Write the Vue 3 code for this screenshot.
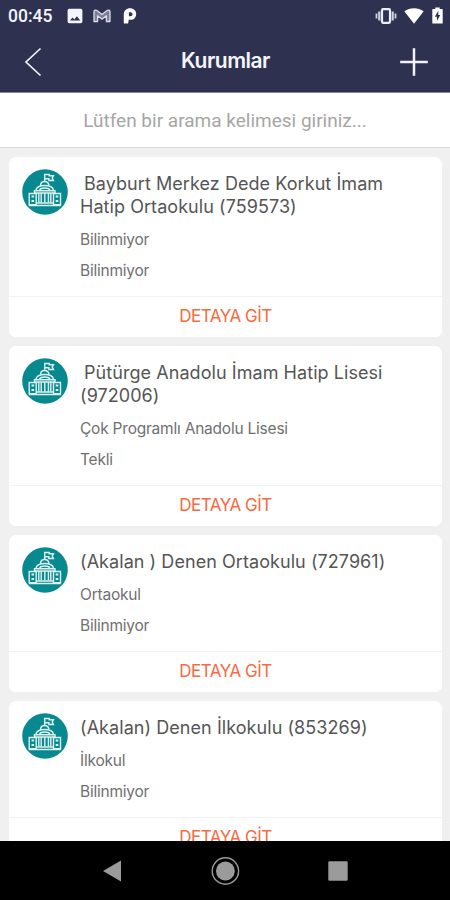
<template>
  <div class="screen">
    <header class="header">
      <div class="status-bar">
        <span class="clock">00:45</span>
        <svg class="status-image" width="16" height="16" viewBox="0 0 16 16">
          <path fill="#f4f4fb" fill-rule="evenodd" d="M2.3.7h11.4a1.7 1.7 0 0 1 1.7 1.7v11.2a1.7 1.7 0 0 1-1.7 1.7H2.3a1.7 1.7 0 0 1-1.7-1.7V2.4A1.7 1.7 0 0 1 2.3.7zM3 12.6h10.2L9.9 8.2l-2.6 3.3-1.8-2z" />
        </svg>
        <svg class="status-mail" width="18" height="14" viewBox="0 0 18 14">
          <path fill="#7d7f96" stroke="#dcdde8" stroke-width="1.3" stroke-linejoin="round" d="M1 12.500V2.800C1 1 2.800.6 4 1.600L9 5.500l5-3.900c1.200-1 3-.6 3 1.200v9.700h-3.600V6.800L9 10.200 4.600 6.800v5.700z" />
        </svg>
        <svg class="status-p" width="14" height="16" viewBox="0 0 14 16">
          <path fill="#fff" fill-rule="evenodd" d="M.8 15.500V6.200C.8 2.700 3.500.3 7 .3s6.200 2.300 6.200 5.600-2.400 5.900-5.500 5.900c-.8 0-1.400-.1-1.900-.3l-.7 4zM5.900 4.200v4h1.500c1.400 0 2.100-.8 2.100-2s-.8-2-2.100-2z" />
        </svg>
        <span class="spacer"></span>
        <svg class="status-vibrate" width="22" height="16" viewBox="0 0 22 16">
          <rect x="7" y="1.200" width="8" height="13.600" rx="1" fill="none" stroke="#eeeef6" stroke-width="2.200" />
          <path d="M4.300 3.500v9M17.700 3.500v9" stroke="#d0d1df" stroke-width="2.200" />
          <path d="M1.500 5.500v5M20.500 5.500v5" stroke="#d0d1df" stroke-width="1.800" />
        </svg>
        <svg class="status-wifi" width="20" height="16" viewBox="0 0 20 16">
          <path fill="#fff" d="M.3 3.300C6 -.8 14 -.8 19.700 3.300L10 15.700z" />
        </svg>
        <svg class="status-battery" width="11" height="17" viewBox="0 0 11 17">
          <path fill="#fff" d="M3.300.4h4.400v1.700H10a.7.7 0 0 1 .7.7v13.100a.7.7 0 0 1-.7.7H1a.7.7 0 0 1-.7-.7V2.800a.7.7 0 0 1 .7-.7h2.300z" />
          <path fill="#2e3150" d="M6.300 3.800 2.800 9.800h2.100v4.300l3.400-6H6.300z" />
        </svg>
      </div>
      <nav class="nav-bar">
        <svg width="20" height="30" viewBox="0 0 20 30">
          <path fill="none" stroke="#f3f3fa" stroke-width="1.700" d="M17.500 1.500 3 15l14.500 13.500" />
        </svg>
        <h1>Kurumlar</h1>
        <svg width="28" height="28" viewBox="0 0 28 28">
          <path stroke="#f3f3fa" stroke-width="2.500" d="M14 .2v27.600M.2 14h27.600" />
        </svg>
      </nav>
    </header>

    <div class="search">
      <input v-model="query" type="text" placeholder="Lütfen bir arama kelimesi giriniz..." />
    </div>

    <main class="list">
      <article v-for="item in filtered" :key="item.title" class="card">
        <div class="card-body">
          <svg class="logo" width="46" height="46" viewBox="0 0 46 46">
            <circle cx="23" cy="23" r="22.800" fill="#07898f" />
            <g fill="none" stroke="#dff3f2" stroke-width="1.400">
              <path d="M22.700 12V5.500h4.500v1.300h4.200l-1.200 2.300 1.200 2.400h-4.500v-1.700h-4" />
              <path d="M18.500 16.200c.5-5 7.500-5 8.500 0M14 21c1.500-6 16-6 17.500 0M17.500 21c1.500-2.700 9-2.700 10.500 0" />
              <path d="M12.500 21.800h20.500v2.200H12.500z" />
              <path d="M7.200 24.500h7v11.300h-7zM31.500 24.500h7v11.300h-7z" />
              <path d="M7 36.500h31.700M14 34h17.500" stroke-width="1.700" />
              <path d="M16.800 24v9.500M19.200 24v9.500M22.800 24v9.500M26.400 24v9.500M28.800 24v9.500" />
              <path d="M9.500 27.600h2.600M9.500 32h2.600M33.700 27.600h2.600M33.700 32h2.600" stroke-width="2" />
            </g>
          </svg>
          <div class="info">
            <h2 :class="{ indented: item.indented }">{{ item.title }}</h2>
            <p>{{ item.type }}</p>
            <p>{{ item.mode }}</p>
          </div>
        </div>
        <button class="detail" type="button"><span>DETAYA GİT</span></button>
      </article>
    </main>

    <footer class="system-nav">
      <svg width="20" height="22" viewBox="0 0 20 22">
        <path fill="#9b9b9b" d="M19 .6v20.800L1 11z" />
      </svg>
      <svg width="30" height="30" viewBox="0 0 30 30">
        <circle cx="15.400" cy="15" r="13.200" fill="none" stroke="#9b9b9b" stroke-width="1.400" />
        <circle cx="15.400" cy="15" r="9.400" fill="#9b9b9b" />
      </svg>
      <svg width="20" height="20" viewBox="0 0 20 20">
        <rect x=".3" y=".3" width="19.400" height="19.400" rx="1.200" fill="#9b9b9b" />
      </svg>
    </footer>
  </div>
</template>

<script setup>
import { computed, ref } from 'vue'

const query = ref('')

const institutions = [
  { title: 'Bayburt Merkez Dede Korkut İmam Hatip Ortaokulu (759573)', type: 'Bilinmiyor', mode: 'Bilinmiyor', indented: true },
  { title: 'Pütürge Anadolu İmam Hatip Lisesi (972006)', type: 'Çok Programlı Anadolu Lisesi', mode: 'Tekli', indented: true },
  { title: '(Akalan ) Denen Ortaokulu (727961)', type: 'Ortaokul', mode: 'Bilinmiyor' },
  { title: '(Akalan) Denen İlkokulu (853269)', type: 'İlkokul', mode: 'Bilinmiyor' },
]

const filtered = computed(() => {
  const term = query.value.toLocaleLowerCase('tr')
  return institutions.filter((item) => item.title.toLocaleLowerCase('tr').includes(term))
})
</script>

<style>
body {
  margin: 0;
}
</style>

<style scoped>
.screen {
  display: flex;
  flex-direction: column;
  width: 450px;
  height: 900px;
  overflow: hidden;
  background: #f0f0f0;
  font-family: Inter, "Liberation Sans", sans-serif;
}

svg {
  display: block;
  flex: none;
}

.header {
  flex: none;
  height: 92px;
  background: #2e3150;
  border-bottom: 1px solid #85879a;
  color: #f5f5fc;
}

.status-bar {
  display: flex;
  align-items: center;
  height: 31px;
  padding: 0 7px 0 8px;
}

.clock {
  width: 59px;
  font: 500 17.5px/32px Roboto, sans-serif;
}

.status-mail {
  margin-left: 10px;
}

.status-p {
  margin-left: 12px;
}

.spacer {
  flex: 1;
}

.status-wifi {
  margin-left: 7px;
}

.status-battery {
  margin-left: 8px;
}

.nav-bar {
  display: flex;
  align-items: center;
  justify-content: space-between;
  height: 62px;
  padding: 0 22px 0 23px;
}

h1 {
  margin: 0 0 3px;
  padding-left: 8px;
  font-size: 21px;
  font-weight: 600;
  letter-spacing: -0.5px;
}

.search {
  flex: none;
  height: 54px;
  background: #fff;
  border-bottom: 1px solid #d9d9d9;
}

.search input {
  box-sizing: border-box;
  width: 100%;
  height: 54px;
  padding: 0;
  border: 0;
  outline: 0;
  background: transparent;
  color: #555;
  font: 19px Roboto, sans-serif;
  text-align: center;
}

.search input::placeholder {
  color: #a6a6a6;
}

.list {
  display: flex;
  flex: 1;
  flex-direction: column;
  gap: 9px;
  min-height: 0;
  padding: 9px 8px 0 9px;
  overflow: hidden;
}

.card {
  flex: none;
  overflow: hidden;
  border-radius: 7px;
  background: #fff;
}

.card-body {
  display: flex;
  padding: 12px 13px 10px;
}

.info {
  flex: 1;
  padding: 3px 0 0 12px;
}

h2 {
  margin: 0 0 6px;
  color: #555;
  font-size: 18px;
  font-weight: 400;
  letter-spacing: 0.06px;
  line-height: 23px;
}

h2.indented {
  text-indent: 4px;
}

p {
  margin: 0;
  color: #707070;
  font-size: 15.5px;
  letter-spacing: -0.22px;
  line-height: 31px;
}

.detail {
  display: block;
  width: 100%;
  height: 41px;
  padding: 0 0 2px;
  border: 0;
  border-top: 1px solid #f2f2f2;
  background: #fff;
  color: #f86a40;
  font: 17px Inter, sans-serif;
  letter-spacing: -0.5px;
}

.system-nav {
  display: flex;
  flex: none;
  align-items: center;
  justify-content: space-between;
  height: 59px;
  padding: 0 102px;
  background: #000;
}
</style>
